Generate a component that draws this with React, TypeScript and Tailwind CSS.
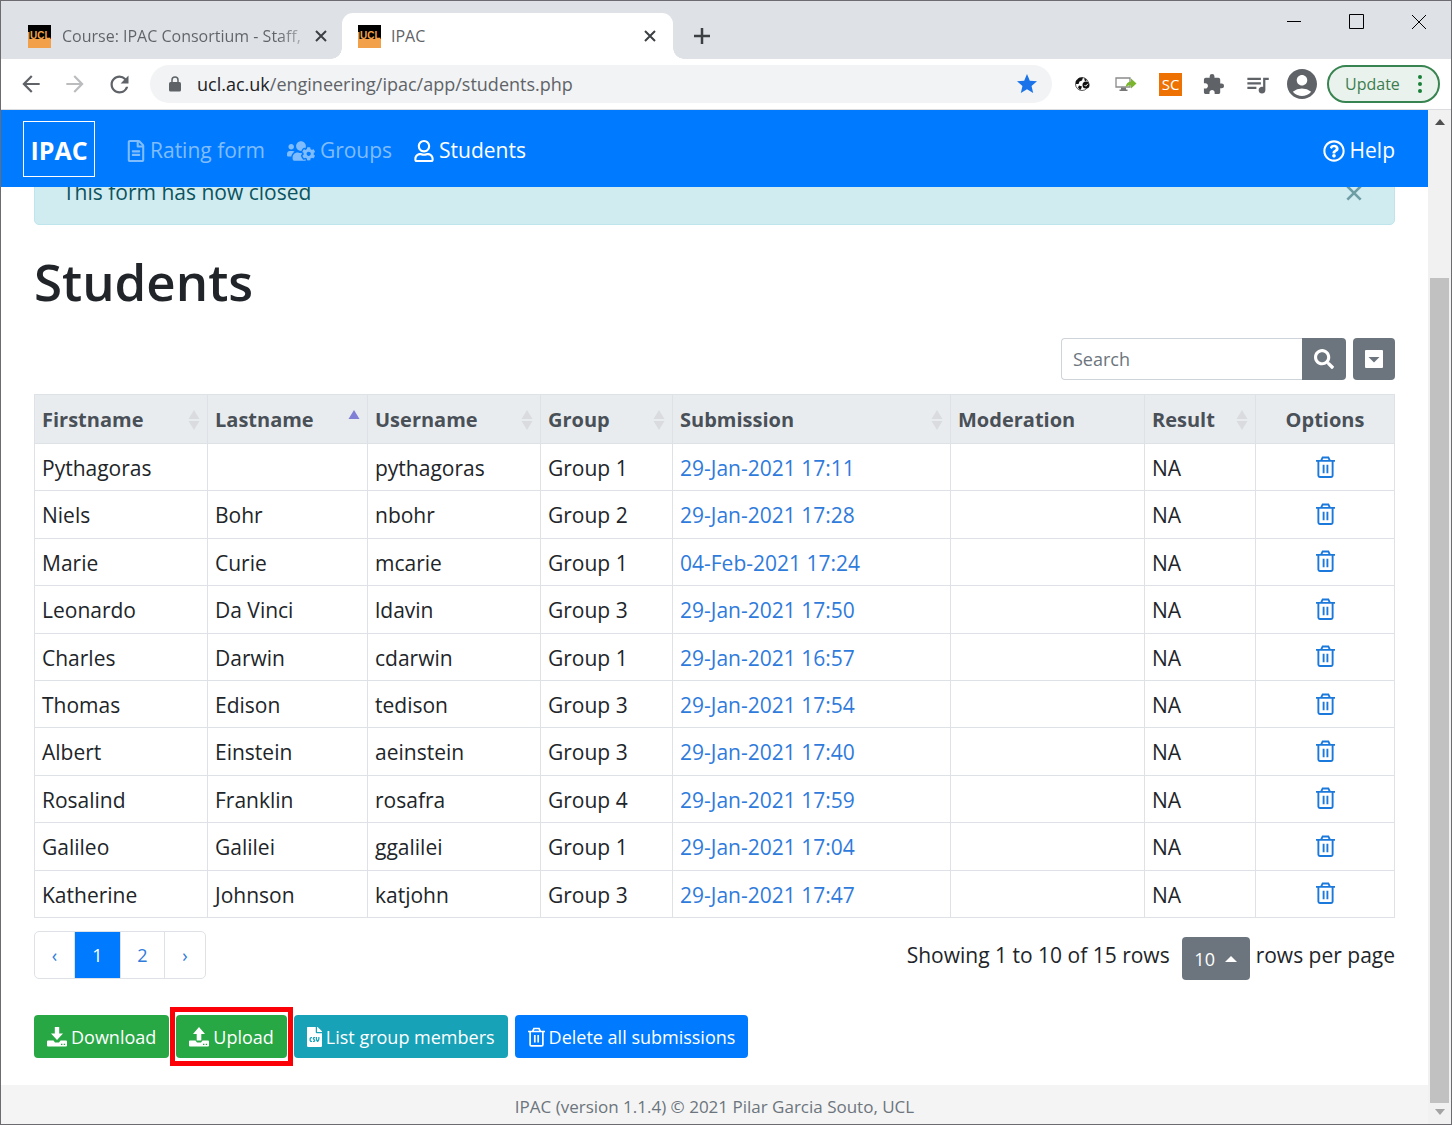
import type { ReactNode } from 'react'
import { FaFileCsv, FaRegFileAlt, FaRegQuestionCircle, FaRegUser, FaSearch, FaUsersCog } from 'react-icons/fa'
import { MdAccountCircle, MdArrowBack, MdArrowForward, MdExtension, MdQueueMusic, MdRefresh, MdStar } from 'react-icons/md'

type Student = {
  first: string
  last: string
  username: string
  group: string
  submitted: string
}

const STUDENTS: Student[] = [
  { first: 'Pythagoras', last: '', username: 'pythagoras', group: 'Group 1', submitted: '29-Jan-2021 17:11' },
  { first: 'Niels', last: 'Bohr', username: 'nbohr', group: 'Group 2', submitted: '29-Jan-2021 17:28' },
  { first: 'Marie', last: 'Curie', username: 'mcarie', group: 'Group 1', submitted: '04-Feb-2021 17:24' },
  { first: 'Leonardo', last: 'Da Vinci', username: 'ldavin', group: 'Group 3', submitted: '29-Jan-2021 17:50' },
  { first: 'Charles', last: 'Darwin', username: 'cdarwin', group: 'Group 1', submitted: '29-Jan-2021 16:57' },
  { first: 'Thomas', last: 'Edison', username: 'tedison', group: 'Group 3', submitted: '29-Jan-2021 17:54' },
  { first: 'Albert', last: 'Einstein', username: 'aeinstein', group: 'Group 3', submitted: '29-Jan-2021 17:40' },
  { first: 'Rosalind', last: 'Franklin', username: 'rosafra', group: 'Group 4', submitted: '29-Jan-2021 17:59' },
  { first: 'Galileo', last: 'Galilei', username: 'ggalilei', group: 'Group 1', submitted: '29-Jan-2021 17:04' },
  { first: 'Katherine', last: 'Johnson', username: 'katjohn', group: 'Group 3', submitted: '29-Jan-2021 17:47' },
]

const COLUMNS: { label: string; width: string; sort?: 'none' | 'asc' }[] = [
  { label: 'Firstname', width: 'w-[173px]', sort: 'none' },
  { label: 'Lastname', width: 'w-[160px]', sort: 'asc' },
  { label: 'Username', width: 'w-[173px]', sort: 'none' },
  { label: 'Group', width: 'w-[132px]', sort: 'none' },
  { label: 'Submission', width: 'w-[278px]', sort: 'none' },
  { label: 'Moderation', width: 'w-[194px]' },
  { label: 'Result', width: 'w-[111px]', sort: 'none' },
  { label: 'Options', width: 'w-[139px]' },
]

function Favicon() {
  return (
    <svg viewBox="0 0 23 23" className="size-[23px] shrink-0" aria-hidden="true">
      <rect width="23" height="23" fill="#000" />
      <rect y="14" width="23" height="9" fill="#f2a14a" />
      <rect y="7" width="1.500" height="7" fill="#f2a14a" />
      <text x="2" y="14" fontSize="10" fontWeight="700" fill="#f2a14a" fontFamily="Liberation Sans, sans-serif">UCL</text>
    </svg>
  )
}

function CloseIcon({ className }: { className: string }) {
  return (
    <svg viewBox="0 0 12 12" className={className} fill="none" stroke="currentColor" strokeWidth="2" aria-hidden="true">
      <path d="M1 1l10 10M11 1L1 11" />
    </svg>
  )
}

function LockIcon() {
  return (
    <svg viewBox="0 0 12 16" className="h-4 w-3" aria-hidden="true">
      <rect y="6" width="12" height="9.500" rx="1.500" fill="currentColor" />
      <path d="M3 7V4a3 3 0 0 1 6 0v3" fill="none" stroke="currentColor" strokeWidth="1.500" />
    </svg>
  )
}

function TrashIcon({ className }: { className: string }) {
  return (
    <svg viewBox="0 0 20 23" className={className} fill="none" stroke="currentColor" strokeWidth="2" aria-hidden="true">
      <path d="M0 5h20M2.500 5v15.500a1.500 1.500 0 0 0 1.500 1.500h12a1.500 1.500 0 0 0 1.500-1.500V5M5.500 4.500L7 1.500h6l1.500 3M8 9v9M12 9v9" />
    </svg>
  )
}

function TrayIcon({ up }: { up?: boolean }) {
  return (
    <svg viewBox="0 0 20 20" className="size-5" fill="currentColor" aria-hidden="true">
      {up ? <path d="M10 0l6 7h-3.700v6.500h-4.600V7H4z" /> : <path d="M7.800 0h4.400v6.500H16l-6 6.500-6-6.500h3.800z" />}
      <path
        fillRule="evenodd"
        d="M1 13.500h5.500l1.500 2h4l1.500-2H19a1 1 0 0 1 1 1V18.500a1 1 0 0 1-1 1H1a1 1 0 0 1-1-1v-4a1 1 0 0 1 1-1zM14 16.800v1.200h1.400v-1.200zM16.700 16.800v1.200h1.400v-1.200z"
      />
    </svg>
  )
}

function SortArrows({ sort }: { sort: 'none' | 'asc' }) {
  return (
    <svg viewBox="0 0 12 20" className="h-5 w-3 shrink-0" aria-hidden="true">
      <path d="M6 0l5.500 9h-11z" fill={sort === 'asc' ? '#7f7fd5' : '#d9dbde'} />
      {sort === 'none' && <path d="M6 20l5.500-9h-11z" fill="#d9dbde" />}
    </svg>
  )
}

function NavLink({ icon, children, active }: { icon: ReactNode; children: ReactNode; active?: boolean }) {
  return (
    <a href="#" className={`flex items-center gap-[5px] ${active ? 'text-white' : 'text-[#80bdff]'}`}>
      {icon}
      {children}
    </a>
  )
}

function BrowserChrome() {
  return (
    <div className="text-[#5f6368]">
      {/* Tab strip */}
      <div className="flex h-[58px] items-end justify-between bg-[#dee1e6]">
        <div className="flex min-w-0 items-end">
          <div className="flex h-[46px] w-[341px] items-center pr-[15px] pl-[27px]">
            <Favicon />
            <span className="ml-[11px] bg-linear-to-r from-[#5f6368] from-90% to-[#5f6368]/40 bg-clip-text text-base whitespace-nowrap text-transparent">
              Course: IPAC Consortium - Staff,
            </span>
            <button aria-label="Close tab" className="ml-auto text-[#3c4043]"><CloseIcon className="size-3" /></button>
          </div>
          <div className="relative flex h-[46px] w-[331px] items-center rounded-t-[11px] bg-white pr-[17px] pl-4">
            <span className="absolute bottom-0 -left-[11px] size-[11px] bg-radial-[at_0%_0%] from-transparent from-[10.5px] to-white to-[11px]" />
            <span className="absolute -right-[11px] bottom-0 size-[11px] bg-radial-[at_100%_0%] from-transparent from-[10.5px] to-white to-[11px]" />
            <Favicon />
            <span className="ml-[10px] text-base">IPAC</span>
            <button aria-label="Close tab" className="ml-auto text-[#3c4043]"><CloseIcon className="size-3" /></button>
          </div>
          <button aria-label="New tab" className="flex h-[46px] w-[58px] items-center justify-center text-[#3c4043]">
            <svg viewBox="0 0 16 16" className="size-4" stroke="currentColor" strokeWidth="2.500"><path d="M8 0v16M0 8h16" /></svg>
          </button>
        </div>
        <div className="flex gap-[46px] self-start pt-3 pr-6 text-black">
          <button aria-label="Minimize"><svg viewBox="0 0 16 16" className="size-4" stroke="currentColor" shapeRendering="crispEdges"><path d="M0 8.500h14" /></svg></button>
          <button aria-label="Maximize"><svg viewBox="0 0 16 16" className="size-4" fill="none" stroke="currentColor"><path d="M.5 1.500h14v14H.5z" /></svg></button>
          <button aria-label="Close"><svg viewBox="0 0 16 16" className="size-4" stroke="currentColor"><path d="M1 2l14 14M15 2L1 16" /></svg></button>
        </div>
      </div>

      {/* Toolbar */}
      <div className="flex h-[51px] items-center border-b border-[#dadce0] bg-white pr-[11px] pl-[17px]">
        <button aria-label="Back"><MdArrowBack className="size-[26px]" /></button>
        <button aria-label="Forward" className="ml-[18px] text-[#babcbe]"><MdArrowForward className="size-[26px]" /></button>
        <button aria-label="Reload" className="ml-[18px]"><MdRefresh className="size-[27px]" /></button>
        <div className="ml-[17px] flex h-[38px] min-w-0 flex-1 items-center rounded-full bg-[#f1f3f4] pr-[13px] pl-[19px]">
          <LockIcon />
          <span className="ml-4 text-lg"><span className="text-[#202124]">ucl.ac.uk</span>/engineering/ipac/app/students.php</span>
          <button aria-label="Bookmark" className="ml-auto text-[#1a73e8]"><MdStar className="size-6" /></button>
        </div>
        <button aria-label="World extension" className="ml-[22px]">
          <svg viewBox="0 0 16 16" className="size-4">
            <circle cx="8" cy="8" r="6.500" fill="#fff" stroke="#111" strokeWidth=".7" />
            <path d="M2 5l3-3 4-.5-1 3-2.500 1-1 2.500L2 8zM10 2l3 2-2 1.500zM5 9.500l3 1-1 2.500-1 1-2-2.500z" fill="#111" />
            <circle cx="12" cy="9" r="3.500" fill="#111" />
            <path d="M10.500 9l1.200 1.200L14 7.700" fill="none" stroke="#fff" />
          </svg>
        </button>
        <button aria-label="Screen share extension" className="ml-[25px]">
          <svg viewBox="0 0 22 16" className="h-4 w-[22px]">
            <path d="M1 2h14v9H1z" fill="#fff" stroke="#8a8a8a" strokeWidth="1.300" />
            <path d="M6 11.500h5v2h1.500V15h-8v-1.500H6z" fill="#777" />
            <path d="M10.500 11.500c.5-4 2.500-6 5.500-6V2.500l5.500 5-5.500 5V9.300c-2.200-.2-4 .7-5.500 2.200z" fill="#7ab52b" />
          </svg>
        </button>
        <button aria-label="SC extension" className="ml-[22px] size-[23px] bg-[#ed7203] text-[15px] leading-[23px] text-white">SC</button>
        <button aria-label="Extensions" className="ml-5"><MdExtension className="size-[23px]" /></button>
        <button aria-label="Media" className="ml-[19px]"><MdQueueMusic className="size-[27px]" /></button>
        <button aria-label="Profile" className="ml-[13px]"><MdAccountCircle className="size-9" /></button>
        <button className="ml-[7px] flex h-[38px] w-[113px] items-center justify-between rounded-full border-2 border-[#388451] bg-[#e9f2ec] pr-4 pl-4 text-base text-[#3c7d50]">
          Update
          <svg viewBox="0 0 4 20" className="h-5 w-1" fill="#188038" aria-hidden="true">
            <circle cx="2" cy="3" r="2" /><circle cx="2" cy="10" r="2" /><circle cx="2" cy="17" r="2" />
          </svg>
        </button>
      </div>
    </div>
  )
}

function StudentsTable() {
  return (
    <table className="mt-3.5 h-[524px] w-full table-fixed border-collapse text-left [&_td]:border [&_td]:border-[#dee2e6] [&_td]:px-[7px] [&_td]:pt-[3px] [&_th]:border [&_th]:border-[#dee2e6] [&_th]:px-[7px] [&_th]:pt-0.5">
      <thead className="text-xl">
        <tr className="h-[49px] bg-[#e9ecef] text-[#495057]">
          {COLUMNS.map(({ label, width, sort }) => (
            <th key={label} className={`${width} font-bold`}>
              {sort ? (
                <div className="flex items-center justify-between">
                  {label}
                  <SortArrows sort={sort} />
                </div>
              ) : (
                <div className={label === 'Options' ? 'text-center' : ''}>{label}</div>
              )}
            </th>
          ))}
        </tr>
      </thead>
      <tbody>
        {STUDENTS.map((s) => (
          <tr key={s.username} className="h-[47px]">
            <td>{s.first}</td>
            <td>{s.last}</td>
            <td>{s.username}</td>
            <td>{s.group}</td>
            <td><a href="#" className="text-[#2f7bdc]">{s.submitted}</a></td>
            <td></td>
            <td>NA</td>
            <td>
              <button aria-label={`Delete submission of ${s.first}`} className="mx-auto block pb-1 text-[#1c79dc]">
                <TrashIcon className="h-[22px] w-[19px]" />
              </button>
            </td>
          </tr>
        ))}
      </tbody>
    </table>
  )
}

export default function App() {
  return (
    <div className="flex min-h-screen flex-col border border-[#6b6b70] bg-white font-['Open_Sans','Noto_Sans',sans-serif]">
      <BrowserChrome />

      <div className="flex flex-1">
        <div className="flex min-w-0 flex-1 flex-col text-[21px] text-[#212529]">
          {/* Navbar */}
          <nav className="relative z-10 flex h-[77px] items-center bg-[#007bff] pr-[33px] pl-[22px]">
            <a href="#" className="flex h-[56px] w-[72px] items-center justify-center border border-white pt-1 text-[25px] font-bold text-white">IPAC</a>
            <div className="ml-8 flex gap-[22px] pt-1">
              <NavLink icon={<FaRegFileAlt className="h-[22px] w-[18px]" />}>Rating form</NavLink>
              <NavLink icon={<FaUsersCog className="size-7" />}>Groups</NavLink>
              <NavLink icon={<FaRegUser className="h-[22px] w-5" />} active>Students</NavLink>
            </div>
            <div className="ml-auto pt-1">
              <NavLink icon={<FaRegQuestionCircle className="size-[22px]" />} active>Help</NavLink>
            </div>
          </nav>

          <main className="px-[33px]">
            <div role="alert" className="-mt-[29px] flex h-[67px] items-center justify-between rounded-[5px] border border-[#bee5eb] bg-[#d1ecf1] pt-0.5 pr-8 pl-7 text-[#0c5460]">
              This form has now closed
              <button aria-label="Close alert" className="text-[#6d9da5]"><CloseIcon className="size-4" /></button>
            </div>

            <h1 className="mt-[23px] text-[51px] leading-[66px] font-semibold">Students</h1>

            <div className="mt-6 flex justify-end">
              <input
                type="text"
                aria-label="Search"
                placeholder="Search"
                className="h-[42px] w-[241px] rounded-l border border-r-0 border-[#ced4da] px-[11px] text-lg placeholder:text-[#6c757d]"
              />
              <button aria-label="Run search" className="flex w-11 items-center justify-center rounded-r bg-[#6c757d] text-white"><FaSearch className="size-5" /></button>
              <button aria-label="More options" className="ml-[7px] flex w-[42px] items-center justify-center rounded bg-[#6c757d] text-white">
                <svg viewBox="0 0 18 18" className="size-[18px]" aria-hidden="true">
                  <rect width="18" height="18" rx="1" fill="currentColor" />
                  <path d="M3.500 7h11L9 12.500z" fill="#6c757d" />
                </svg>
              </button>
            </div>

            <StudentsTable />

            {/* Pagination */}
            <div className="mt-[13px] flex h-12 items-start justify-between">
              <div className="flex h-12 divide-x divide-[#dee2e6] overflow-hidden rounded-[5px] border border-[#dee2e6] text-lg text-[#2f7bdc] [&>a]:flex [&>a]:items-center [&>a]:justify-center">
                <a href="#" aria-label="Previous page" className="w-10">‹</a>
                <a href="#" className="-my-px w-[46px] bg-[#007bff] text-white">1</a>
                <a href="#" className="w-11">2</a>
                <a href="#" aria-label="Next page" className="w-10">›</a>
              </div>
              <div className="mt-1.5 flex">
                <span className="leading-9">Showing 1 to 10 of 15 rows</span>
                <button className="mr-1.5 ml-3 flex h-[43px] w-[68px] items-center justify-center gap-2.5 rounded bg-[#6c757d] text-lg text-white">
                  10
                  <svg viewBox="0 0 12 6" className="h-1.5 w-3" fill="currentColor" aria-hidden="true"><path d="M6 0l6 6H0z" /></svg>
                </button>
                <span className="leading-9">rows per page</span>
              </div>
            </div>

            <div className="mt-9 flex gap-[7px] text-lg text-white [&_button]:flex [&_button]:h-[43px] [&_button]:items-center [&_button]:gap-1 [&_button]:rounded [&_button]:px-[13px]">
              <button className="bg-[#28a745]"><TrayIcon />Download</button>
              <div className="relative">
                <button className="bg-[#28a745]"><TrayIcon up />Upload</button>
                <span className="pointer-events-none absolute -inset-x-1.5 -inset-y-2 z-10 border-5 border-[#fb0007]" />
              </div>
              <button className="bg-[#17a2b8]"><FaFileCsv className="h-5 w-[15px]" />List group members</button>
              <button className="bg-[#007bff]"><TrashIcon className="h-5 w-[17px]" />Delete all submissions</button>
            </div>
          </main>

          <footer className="mt-auto flex h-[39px] items-center justify-center bg-[#f4f4f4] pt-1 text-[17px] text-[#6c757d]">
            IPAC (version 1.1.4) © 2021 Pilar Garcia Souto, UCL
          </footer>
        </div>

        {/* Scrollbar */}
        <div className="flex w-[23px] flex-col items-center bg-[#f1f1f1] py-[9px]">
          <svg viewBox="0 0 10 6" className="h-1.5 w-2.5" fill="#505050"><path d="M5 0l5 6H0z" /></svg>
          <div className="mt-[153px] mb-1.5 w-[19px] flex-1 bg-[#c1c1c1]" />
          <svg viewBox="0 0 10 6" className="h-1.5 w-2.5" fill="#a3a3a3"><path d="M5 6l5-6H0z" /></svg>
        </div>
      </div>
    </div>
  )
}
